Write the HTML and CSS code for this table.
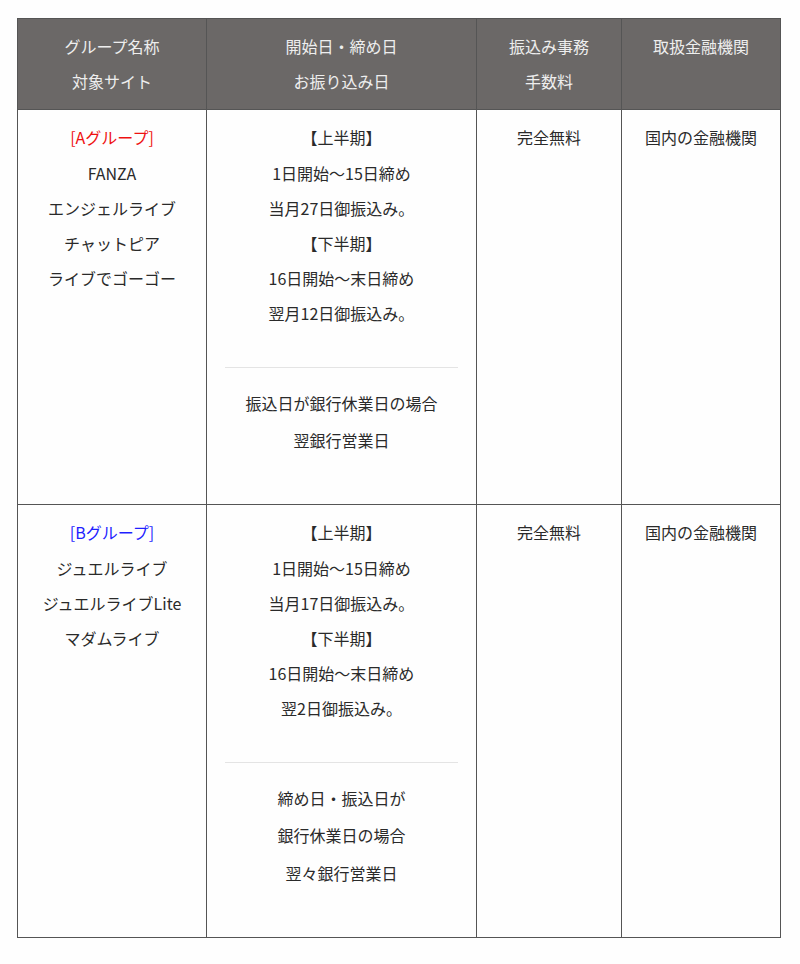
FILE: index.html
```html
<!DOCTYPE html>
<html lang="ja">
<head>
<meta charset="utf-8">
<title>振込スケジュール</title>
<link rel="stylesheet" href="styles.css">
</head>
<body>
<div class="wrap">
<table class="pay">
<colgroup>
<col class="c1"><col class="c2"><col class="c3"><col class="c4">
</colgroup>
<thead>
<tr>
<th>グループ名称<br>対象サイト</th>
<th>開始日・締め日<br>お振り込み日</th>
<th>振込み事務<br>手数料</th>
<th>取扱金融機関</th>
</tr>
</thead>
<tbody>
<tr class="r1">
<td><span class="ga">[Aグループ]</span><br>FANZA<br>エンジェルライブ<br>チャットピア<br>ライブでゴーゴー</td>
<td>
<p class="sched">【上半期】<br>1日開始～15日締め<br>当月27日御振込み。<br>【下半期】<br>16日開始～末日締め<br>翌月12日御振込み。</p>
<hr class="sep">
<p class="note">振込日が銀行休業日の場合<br>翌銀行営業日</p>
</td>
<td>完全無料</td>
<td>国内の金融機関</td>
</tr>
<tr class="r2">
<td><span class="gb">[Bグループ]</span><br>ジュエルライブ<br>ジュエルライブLite<br>マダムライブ</td>
<td>
<p class="sched">【上半期】<br>1日開始～15日締め<br>当月17日御振込み。<br>【下半期】<br>16日開始～末日締め<br>翌2日御振込み。</p>
<hr class="sep">
<p class="note">締め日・振込日が<br>銀行休業日の場合<br>翌々銀行営業日</p>
</td>
<td>完全無料</td>
<td>国内の金融機関</td>
</tr>
</tbody>
</table>
</div>
</body>
</html>
```
FILE: styles.css
```css
html, body {
  margin: 0;
  padding: 0;
  background: #fefefe;
}
.wrap {
  padding: 18px 19px 0 17px;
}
.pay {
  width: 763px;
  table-layout: fixed;
  border-collapse: collapse;
  font-family: "Noto Sans CJK JP", "Noto Sans", sans-serif;
  font-size: 16px;
  line-height: 35.2px;
  color: #2a2a2a;
  border: 1px solid #555;
}
.c1 { width: 189px; }
.c2 { width: 270px; }
.c3 { width: 145px; }
.c4 { width: 159px; }
.pay th, .pay td {
  border: 1px solid #555;
  text-align: center;
  vertical-align: top;
  padding: 10px 18px;
}
.pay th {
  background: #6b6867;
  color: #eeeeee;
  font-weight: normal;
  height: 70px;
}
.r1 td { height: 374px; }
.r2 td { height: 412px; }
.sched {
  margin: 0;
}
.note {
  margin: 0;
  line-height: 37.5px;
}
.sep {
  border: 0;
  border-top: 1px solid #e4e4e4;
  margin: 35px 0 17px;
  height: 0;
}
.ga { color: #ee1111; }
.gb { color: #1f1fff; }
```
